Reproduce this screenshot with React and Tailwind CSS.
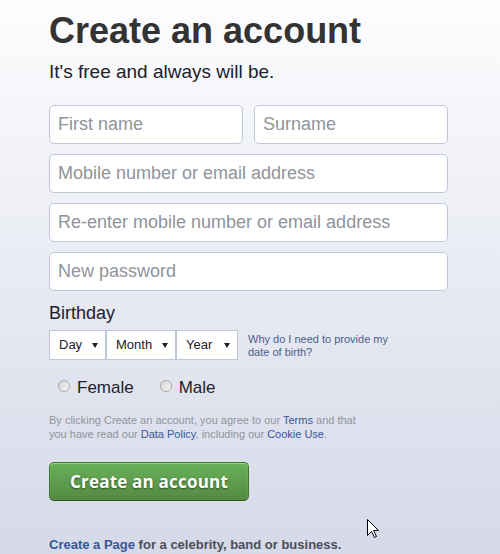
import React from "react";

function Select({ label, width }) {
  return (
    <div
      className={
        "h-[30px] border border-[#bdc7d8] bg-white flex items-center justify-between pl-[9px] pr-[7px] text-[13px] text-[#1d2129] " +
        width
      }
    >
      <span>{label}</span>
      <svg width="6" height="5" viewBox="0 0 6 5">
        <polygon points="0,0 6,0 3,5" fill="#1d2129" />
      </svg>
    </div>
  );
}

function Radio({ label, className }) {
  return (
    <label className={"flex items-start " + className}>
      <span className="mt-[2px] w-[12px] h-[12px] rounded-full border border-[#a7a7a7] bg-linear-to-br from-[#d4d4d4] to-[#f7f7f7]" />
      <span className="ml-[7px]">{label}</span>
    </label>
  );
}

export default function App() {
  const inputCls =
    "h-[39px] w-full rounded-[5px] border border-[#bdc7d8] bg-white px-[8px] text-[18px] text-[#1d2129] placeholder:text-[#90949c] outline-none";

  return (
    <div className="relative min-h-screen bg-linear-to-b from-[#fdfdfe] to-[#d5d9e8] font-['Liberation_Sans',Arial,sans-serif]">
      <div className="pl-[49px] pt-[9px]">
        <h1 className="text-[36px] leading-[43px] font-bold text-[#333333]">
          Create an account
        </h1>
        <p className="mt-[9px] text-[19px] leading-[22px] text-[#1d2129]">
          It's free and always will be.
        </p>

        <div className="mt-[22px] w-[399px] flex flex-col gap-[10px]">
          <div className="grid grid-cols-2 gap-[11px]">
            <input className={inputCls} placeholder="First name" />
            <input className={inputCls} placeholder="Surname" />
          </div>
          <input className={inputCls} placeholder="Mobile number or email address" />
          <input className={inputCls} placeholder="Re-enter mobile number or email address" />
          <input className={inputCls} placeholder="New password" />
        </div>

        <div className="mt-[12px] text-[18px] leading-[21px] text-[#1d2129]">Birthday</div>
        <div className="mt-[6px] flex items-start">
          <Select label="Day" width="w-[57px]" />
          <Select label="Month" width="w-[70px]" />
          <Select label="Year" width="w-[62px]" />
          <p className="ml-[10px] mt-[3px] w-[150px] text-[11px] leading-[13px] text-[#4b5f8a]">
            Why do I need to provide my date of birth?
          </p>
        </div>

        <div className="mt-[18px] flex text-[17px] leading-[20px] text-[#1d2129]">
          <Radio label="Female" className="ml-[9px]" />
          <Radio label="Male" className="ml-[26px]" />
        </div>

        <p className="mt-[15px] w-[315px] text-[11px] leading-[14px] text-[#90949c]">
          By clicking Create an account, you agree to our{" "}
          <span className="text-[#365899]">Terms</span> and that you have read our{" "}
          <span className="text-[#365899]">Data Policy</span>, including our{" "}
          <span className="text-[#365899]">Cookie Use</span>.
        </p>

        <button className="mt-[21px] h-[39px] w-[200px] rounded-[5px] border border-[#3b7a2a] border-b-[#2c5a1c] bg-linear-to-b from-[#69b15a] to-[#548a41] shadow-[inset_0_1px_1px_#9fd98a] text-white font-bold text-[17px] tracking-[0.2px] font-['Open_Sans',Arial,sans-serif] [text-shadow:0_1px_2px_rgba(0,0,0,0.5)]">
          Create an account
        </button>

        <p className="mt-[36px] text-[13px] leading-[16px] font-bold text-[#4b4f56]">
          <span className="text-[#365899]">Create a Page</span> for a celebrity, band or business.
        </p>
      </div>

      <svg
        className="absolute left-[367px] top-[519px]"
        width="13"
        height="20"
        viewBox="0 0 13 20"
      >
        <polygon
          points="0.5,0.5 0.5,16.5 4.5,12.5 7.5,18.5 9.5,17.5 6.5,11.5 11.5,11.5"
          fill="white"
          stroke="black"
          strokeWidth="1"
        />
      </svg>
    </div>
  );
}
